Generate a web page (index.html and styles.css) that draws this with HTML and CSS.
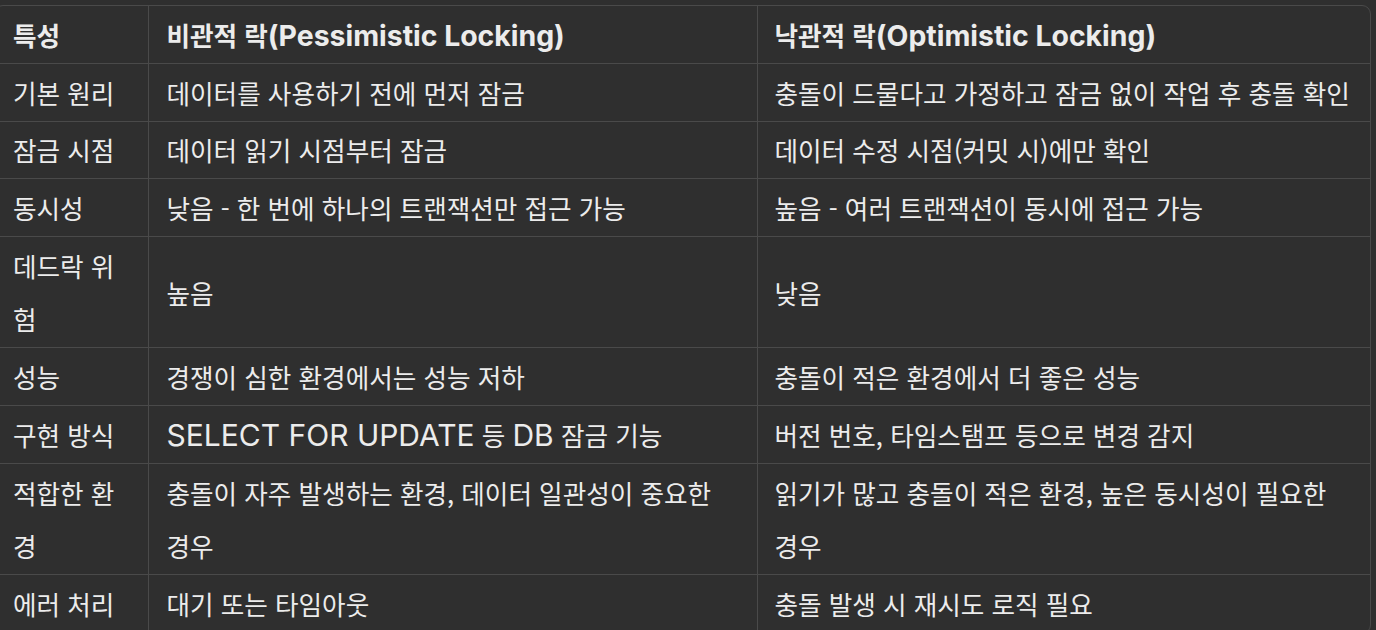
FILE: index.html
```html
<!DOCTYPE html>
<html lang="ko">
<head>
<meta charset="utf-8">
<title>비관적 락 vs 낙관적 락</title>
<link rel="stylesheet" href="styles.css">
</head>
<body>
<div class="table-wrap">
  <table class="cmp">
    <colgroup>
      <col class="c1">
      <col class="c2">
      <col class="c3">
    </colgroup>
    <thead>
      <tr>
        <th>특성</th>
        <th>비관적 락<span class="en">(Pessimistic Locking)</span></th>
        <th>낙관적 락<span class="en">(Optimistic Locking)</span></th>
      </tr>
    </thead>
    <tbody>
      <tr><td>기본 원리</td><td>데이터를 사용하기 전에 먼저 잠금</td><td>충돌이 드물다고 가정하고 잠금 없이 작업 후 충돌 확인</td></tr>
      <tr><td>잠금 시점</td><td>데이터 읽기 시점부터 잠금</td><td>데이터 수정 시점(커밋 시)에만 확인</td></tr>
      <tr><td>동시성</td><td>낮음 - 한 번에 하나의 트랜잭션만 접근 가능</td><td>높음 - 여러 트랜잭션이 동시에 접근 가능</td></tr>
      <tr><td>데드락 위험</td><td>높음</td><td>낮음</td></tr>
      <tr><td>성능</td><td>경쟁이 심한 환경에서는 성능 저하</td><td>충돌이 적은 환경에서 더 좋은 성능</td></tr>
      <tr><td>구현 방식</td><td><span class="en">SELECT FOR UPDATE</span> 등 <span class="en">DB</span> 잠금 기능</td><td>버전 번호, 타임스탬프 등으로 변경 감지</td></tr>
      <tr><td>적합한 환경</td><td>충돌이 자주 발생하는 환경, 데이터 일관성이 중요한 경우</td><td>읽기가 많고 충돌이 적은 환경, 높은 동시성이 필요한 경우</td></tr>
      <tr><td>에러 처리</td><td>대기 또는 타임아웃</td><td>충돌 발생 시 재시도 로직 필요</td></tr>
    </tbody>
  </table>
</div>
</body>
</html>
```

FILE: styles.css
```css
html, body {
  margin: 0;
  padding: 0;
  background: #2f2f2f;
  overflow: hidden;
}

body {
  font-family: "Noto Sans CJK KR", "Noto Sans", sans-serif;
  font-size: 25.6px;
  color: #ececec;
}

.table-wrap {
  margin-top: 5px;
  margin-left: -6px;
  width: 1377px;
  box-sizing: border-box;
  border: 1px solid #4a4a4a;
  border-radius: 9px;
  overflow: hidden;
  background: #2f2f2f;
}

.cmp {
  width: 100%;
  table-layout: fixed;
  border-collapse: collapse;
}

.c1 { width: 153px; }
.c2 { width: 609px; }
.c3 { width: auto; }

.cmp th,
.cmp td {
  padding: 1.8px 17px 1.8px 18px;
  line-height: 53.2px;
  text-align: left;
  vertical-align: middle;
  border-right: 1px solid #4a4a4a;
  border-bottom: 1px solid #4a4a4a;
}

.cmp th:last-child,
.cmp td:last-child {
  border-right: none;
  padding-left: 17px;
  padding-right: 16px;
}

.cmp th {
  font-weight: 700;
}

.en {
  font-family: "Inter", "Liberation Sans", sans-serif;
  font-size: 30px;
  line-height: 1;
}

.cmp th .en {
  font-size: 28.4px;
}
```
